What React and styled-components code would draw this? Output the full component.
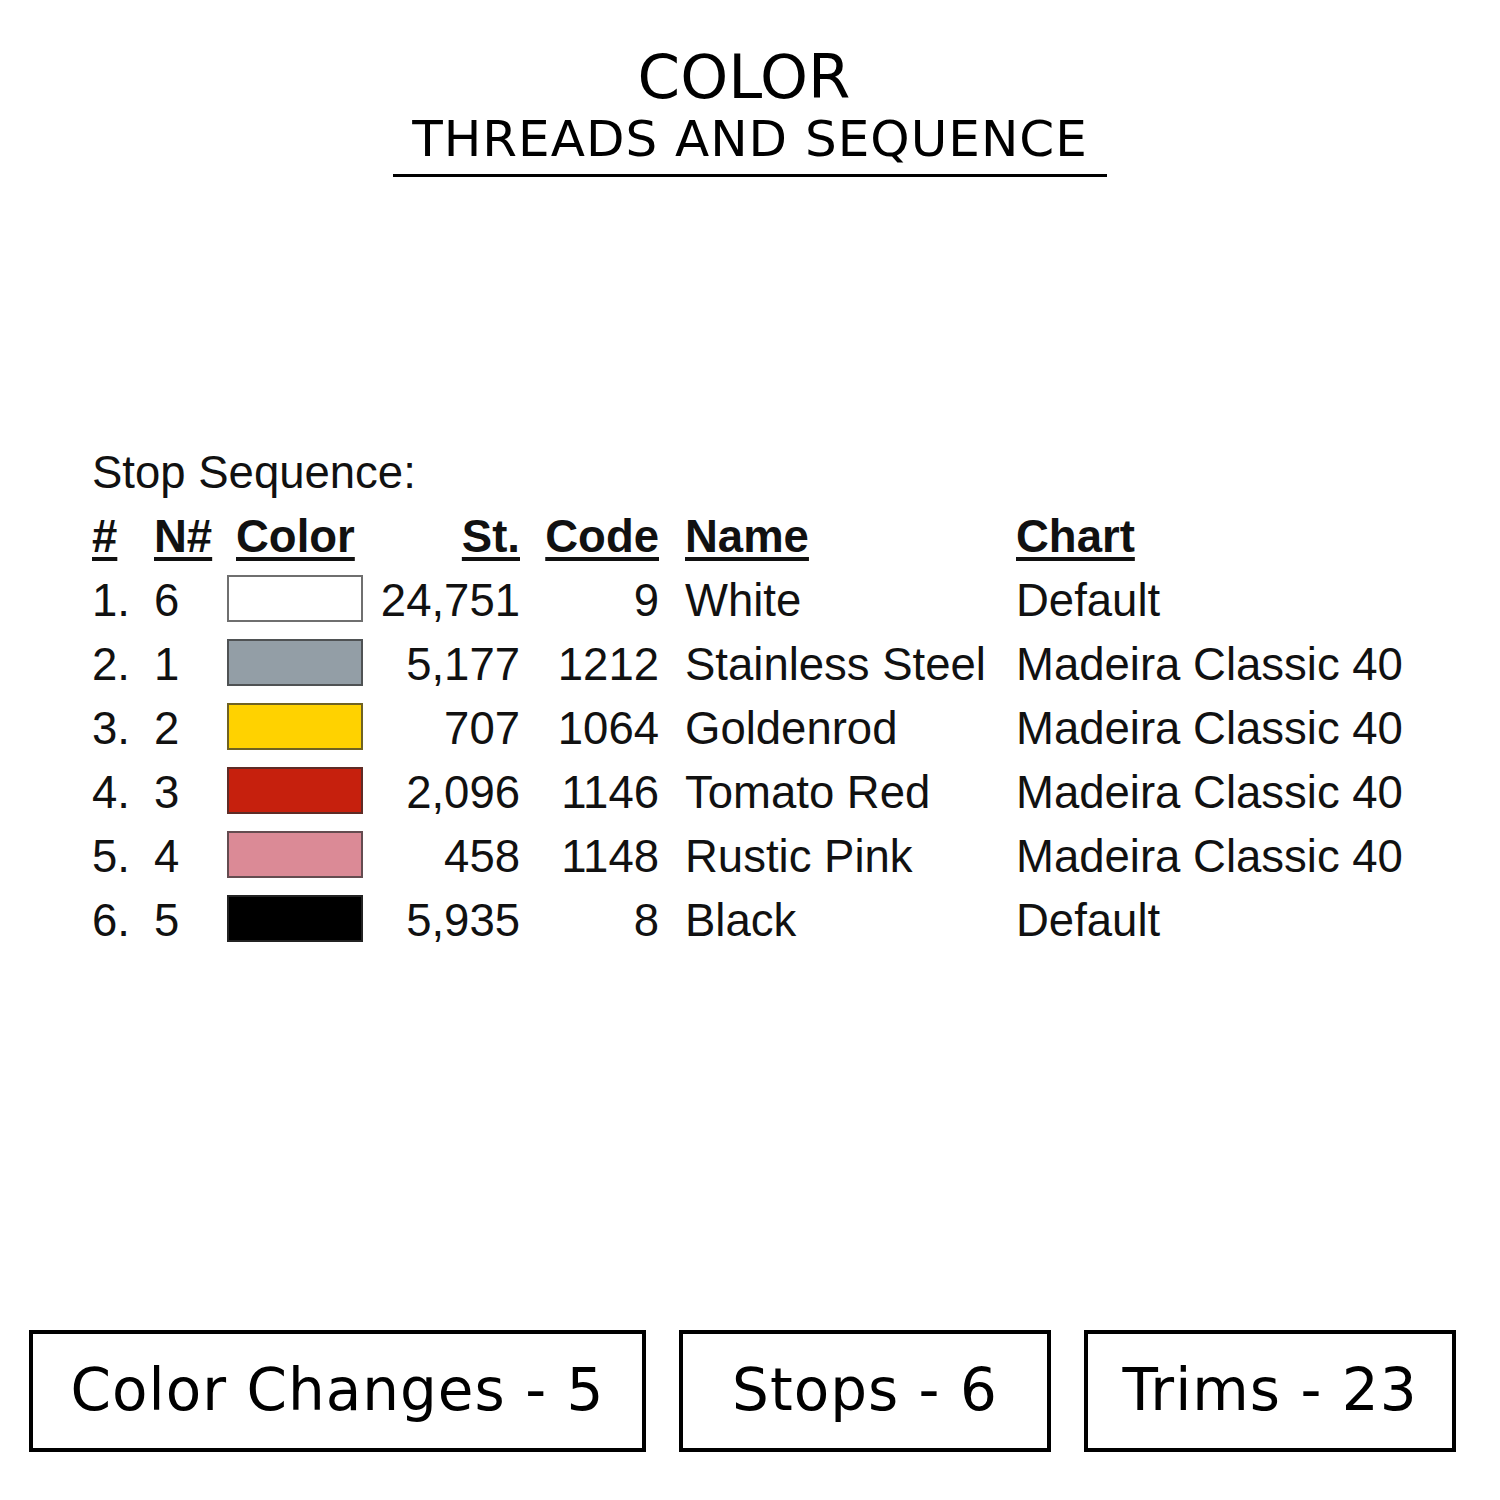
import React from 'react'
import styled, { createGlobalStyle } from 'styled-components'

const GlobalStyle = createGlobalStyle`
    html, body {
        margin: 0;
        padding: 0;
        background: #ffffff;
    }
`

const threads = [
    { n: 6, color: '#ffffff', st: '24,751', code: '9', name: 'White', chart: 'Default' },
    { n: 1, color: '#939ea6', st: '5,177', code: '1212', name: 'Stainless Steel', chart: 'Madeira Classic 40' },
    { n: 2, color: '#ffd200', st: '707', code: '1064', name: 'Goldenrod', chart: 'Madeira Classic 40' },
    { n: 3, color: '#c6200d', st: '2,096', code: '1146', name: 'Tomato Red', chart: 'Madeira Classic 40' },
    { n: 4, color: '#db8a96', st: '458', code: '1148', name: 'Rustic Pink', chart: 'Madeira Classic 40' },
    { n: 5, color: '#000000', st: '5,935', code: '8', name: 'Black', chart: 'Default' },
]

const stats = [
    { label: 'Color Changes - 5', width: 617 },
    { label: 'Stops - 6', width: 372 },
    { label: 'Trims - 23', width: 372 },
]

function App() {
    return (
        <Page>
            <GlobalStyle />
            <Heading>
                <Title>COLOR</Title>
                <Subtitle>THREADS AND SEQUENCE</Subtitle>
            </Heading>

            <Sheet>
                <Caption>Stop Sequence:</Caption>
                <Table>
                    <Head>#</Head>
                    <Head>N#</Head>
                    <Head indent>Color</Head>
                    <Head right>St.</Head>
                    <Head right>Code</Head>
                    <Head indent2>Name</Head>
                    <Head>Chart</Head>

                    {threads.map((t, i) => (
                        <React.Fragment key={i}>
                            <Cell>{i + 1}.</Cell>
                            <Cell>{t.n}</Cell>
                            <Swatch color={t.color} />
                            <Cell right>{t.st}</Cell>
                            <Cell right>{t.code}</Cell>
                            <Cell indent2>{t.name}</Cell>
                            <Cell>{t.chart}</Cell>
                        </React.Fragment>
                    ))}
                </Table>
            </Sheet>

            <Footer>
                {stats.map((s) => (
                    <StatBox key={s.label} width={s.width}>{s.label}</StatBox>
                ))}
            </Footer>
        </Page>
    )
}

export default App


const Page = styled.div`
    width: 1500px;
    height: 1500px;
    display: flex;
    flex-direction: column;
    background: #fff;
    color: #000;
    overflow: hidden;
`

const Heading = styled.div`
    display: flex;
    flex-direction: column;
    align-items: center;
    padding-top: 44px;
    font-family: "DejaVu Sans", "Liberation Sans", sans-serif;
`

const Title = styled.div`
    font-size: 61px;
    line-height: 65px;
    margin-left: -12px;
`

const Subtitle = styled.div`
    margin-top: 2px;
    font-size: 50px;
    line-height: 56px;
    letter-spacing: 1px;
    padding: 0 19px 7px 19px;
    border-bottom: 3px solid #000;
`

const Sheet = styled.div`
    margin-top: 264px;
    padding-left: 92px;
    font-family: "Liberation Sans", Arial, sans-serif;
    font-size: 45.5px;
    line-height: 64px;
    color: #111;
`

const Caption = styled.div`
    height: 64px;
`

const Table = styled.div`
    display: grid;
    grid-template-columns: 62px 73px 136px 157px 139px 357px auto;
    grid-auto-rows: 64px;
`

const Cell = styled.div`
    white-space: nowrap;
    text-align: ${props => props.right ? 'right' : 'left'};
    padding-left: ${props => props.indent2 ? '26px' : props.indent ? '9px' : '0'};
`

const Head = styled(Cell)`
    font-weight: 700;
    text-decoration: underline;
    text-decoration-thickness: 4px;
    text-underline-offset: 5px;
`

const Swatch = styled.div`
    box-sizing: border-box;
    width: 136px;
    height: 47px;
    margin-top: 6px;
    background: ${props => props.color};
    border: 2px solid rgba(50, 50, 50, 0.7);
`

const Footer = styled.div`
    margin-top: auto;
    margin-bottom: 48px;
    padding-left: 29px;
    display: flex;
    gap: 33px;
`

const StatBox = styled.div`
    box-sizing: border-box;
    width: ${props => props.width}px;
    height: 122px;
    border: 4px solid #000;
    display: flex;
    align-items: center;
    justify-content: center;
    font-family: "DejaVu Sans", "Liberation Sans", sans-serif;
    font-size: 58px;
    letter-spacing: 1px;
    padding-bottom: 2px;
`
